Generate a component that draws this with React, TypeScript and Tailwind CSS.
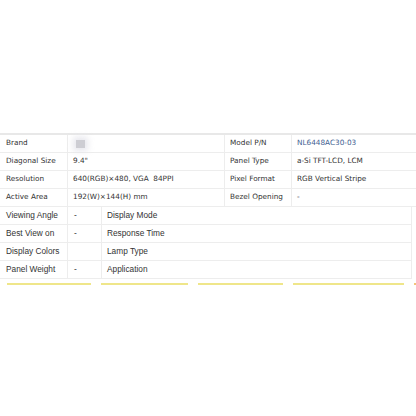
import React from "react";

const topFont = { fontFamily: '"DejaVu Sans", Verdana, sans-serif' };

function TopRow({
  l1,
  v1,
  l2,
  v2,
  blue,
  brand,
}: {
  l1: string;
  v1: string;
  l2: string;
  v2: string;
  blue?: boolean;
  brand?: boolean;
}) {
  return (
    <div className="flex h-[18px] border-b border-[#ededed] text-[7.3px] text-[#333333]" style={topFont}>
      <div className="w-[68px] border-r border-[#ededed] pl-[6px] flex items-center">{l1}</div>
      <div className="w-[157px] border-r border-[#ededed] pl-[5px] flex items-center">
        {brand ? (
          <div className="ml-[3px] w-[9px] h-[8px] bg-[#cdcdd3] shadow-[0_0_6px_3px_rgba(225,225,232,0.8)]" />
        ) : (
          v1
        )}
      </div>
      <div className="w-[67px] border-r border-[#ededed] pl-[5px] flex items-center">{l2}</div>
      <div className={"flex-1 pl-[5px] flex items-center " + (blue ? "text-[#3f5f92]" : "")}>{v2}</div>
    </div>
  );
}

function BottomRow({ l1, v1, l2 }: { l1: string; v1: string; l2: string }) {
  return (
    <div
      className="flex h-[18px] w-[412px] border-b border-r border-[#ededed] text-[8.3px] text-[#333333]"
      style={{ fontFamily: '"Liberation Sans", Arial, sans-serif' }}
    >
      <div className="w-[68px] border-r border-[#ededed] pl-[6px] flex items-center">{l1}</div>
      <div className="w-[34px] border-r border-[#ededed] pl-[6px] flex items-center">{v1}</div>
      <div className="flex-1 pl-[5px] flex items-center">{l2}</div>
    </div>
  );
}

export default function App() {
  return (
    <div className="w-[416px] h-[416px] bg-white pt-[133px] overflow-hidden">
      <div className="h-[2px] bg-[#e8e8e8]" />
      <TopRow l1="Brand" v1="" l2="Model P/N" v2="NL6448AC30-03" blue brand />
      <TopRow l1="Diagonal Size" v1={"9.4\""} l2="Panel Type" v2="a-Si TFT-LCD, LCM" />
      <TopRow l1="Resolution" v1={"640(RGB)×480, VGA\u00a0\u00a084PPI"} l2="Pixel Format" v2="RGB Vertical Stripe" />
      <TopRow l1="Active Area" v1="192(W)×144(H) mm" l2="Bezel Opening" v2="-" />
      <BottomRow l1="Viewing Angle" v1="-" l2="Display Mode" />
      <BottomRow l1="Best View on" v1="-" l2="Response Time" />
      <BottomRow l1="Display Colors" v1="" l2="Lamp Type" />
      <BottomRow l1="Panel Weight" v1="-" l2="Application" />
      <div className="flex items-center mt-[4px] h-[2px]">
        <div className="ml-[7px] w-[84px] h-[2px] bg-[#efe68a]" />
        <div className="ml-[10px] w-[87px] h-[2px] bg-[#efe68a]" />
        <div className="ml-[10px] w-[85px] h-[2px] bg-[#efe68a]" />
        <div className="ml-[10px] w-[111px] h-[2px] bg-[#efe68a]" />
        <div className="ml-[10px] w-[2px] h-[2px] bg-[#f3c47a]" />
      </div>
    </div>
  );
}
